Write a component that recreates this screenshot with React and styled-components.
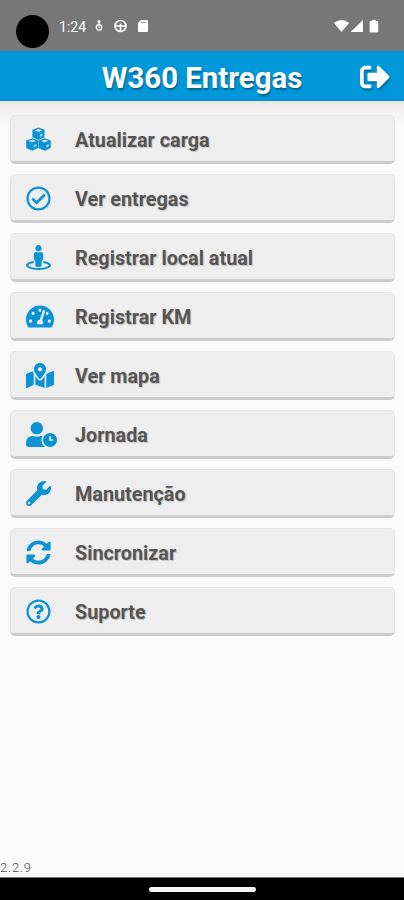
import React from "react";
import styled, { createGlobalStyle } from "styled-components";
import {
  FaRegCheckCircle,
  FaStreetView,
  FaTachometerAlt,
  FaMapMarkedAlt,
  FaUserClock,
  FaWrench,
  FaSyncAlt,
  FaRegQuestionCircle,
  FaSignOutAlt,
} from "react-icons/fa";

const GlobalStyle = createGlobalStyle`
* {
  box-sizing: border-box;
}
body {
  margin: 0;
  background: #fafafa;
  font-family: Roboto, "Liberation Sans", sans-serif;
}
`;

const Screen = styled.div`
width: 100%;
height: 100vh;
display: flex;
flex-direction: column;
overflow: hidden;
background: #fbfbfb;
`;

const StatusBar = styled.div`
height: 51px;
flex-shrink: 0;
display: flex;
align-items: flex-start;
padding: 15px 25px 0 16px;
background: #777777;
color: #fff;
`;

const Camera = styled.div`
width: 33px;
height: 33px;
border-radius: 50%;
background: #000;
`;

const Clock = styled.span`
margin-left: 10px;
width: 29px;
font-size: 14px;
line-height: 24px;
white-space: nowrap;
`;

const StatusIcons = styled.div`
display: flex;
align-items: center;
height: 22px;
margin-left: ${({ $right }) => ($right ? "auto" : "6px")};
svg {
  display: block;
}
`;

const Header = styled.header`
height: 50px;
flex-shrink: 0;
display: grid;
grid-template-columns: 1fr auto 1fr;
align-items: center;
padding: 0 14px;
background: #0198d9;
border-bottom: 1px solid #1786bd;
color: #fff;
`;

const Title = styled.h1`
grid-column: 2;
margin: 5px 0 0;
font-size: 29.4px;
line-height: 36px;
font-weight: 700;
white-space: nowrap;
text-shadow: 1px 2px 2px rgba(0, 0, 0, 0.35);
`;

const LogoutButton = styled.button`
justify-self: end;
margin-top: 2px;
padding: 0;
border: none;
background: none;
color: #fff;
font-size: 30px;
line-height: 0;
filter: drop-shadow(1px 2px 1px rgba(0, 0, 0, 0.3));
`;

const Content = styled.main`
flex: 1;
display: flex;
flex-direction: column;
padding: 14px 9px 0 10px;
background: linear-gradient(#e6e6e6, #f4f4f4 12px, #fbfbfb 26px);
`;

const Menu = styled.nav`
display: flex;
flex-direction: column;
gap: 10px;
`;

const MenuButton = styled.button`
height: 49px;
display: flex;
align-items: center;
padding: 1px 0 0 15px;
border: 1px solid #e7e7e7;
border-bottom: 3px solid #cdcdcd;
border-radius: 5px;
background: #eeeeee;
color: #555555;
font-family: inherit;
font-size: 19.8px;
font-weight: 700;
text-align: left;
text-shadow: 1px 1px 1px rgba(0, 0, 0, 0.18);
`;

const IconSlot = styled.span`
width: 49px;
display: flex;
color: #0c93d6;
svg {
  width: ${({ $width }) => $width || 25}px;
  height: 25px;
  flex-shrink: 0;
}
`;

const Label = styled.span`
padding-top: 3px;
`;

const Version = styled.div`
margin-top: auto;
height: 18px;
margin-left: -10px;
color: #4a4a4a;
font-size: 13px;
font-weight: 300;
line-height: 18px;
letter-spacing: 0.8px;
`;

const NavBar = styled.div`
height: 23px;
flex-shrink: 0;
display: flex;
justify-content: center;
align-items: center;
background: #000;
border-top: 1px solid #777;
`;

const HomeHandle = styled.div`
width: 107px;
height: 5px;
border-radius: 3px;
background: #f4f4f4;
`;

const Cube = ({ x, y }) => (
  <g transform={`translate(${x} ${y})`}>
    <path d="M6.3 0L12.4 2.2V9.7L6.3 12.5L0.2 9.7V2.2z" />
    <path d="M6.3 1.5L10 2.8L6.3 4.1L2.6 2.8z" fill="#eee" />
    <path d="M7.8 6.9L10.4 5.8V8.1L7.8 9.4z" fill="#eee" fillOpacity="0.7" />
  </g>
);

const Cubes = () => (
  <svg viewBox="0 0 25 25" fill="currentColor">
    <Cube x={6.2} y={0.6} />
    <Cube x={0} y={11.2} />
    <Cube x={12.4} y={11.2} />
  </svg>
);

const items = [
  { label: "Atualizar carga", Icon: Cubes },
  { label: "Ver entregas", Icon: FaRegCheckCircle },
  { label: "Registrar local atual", Icon: FaStreetView },
  { label: "Registrar KM", Icon: FaTachometerAlt, width: 28 },
  { label: "Ver mapa", Icon: FaMapMarkedAlt, width: 28 },
  { label: "Jornada", Icon: FaUserClock, width: 31 },
  { label: "Manutenção", Icon: FaWrench },
  { label: "Sincronizar", Icon: FaSyncAlt },
  { label: "Suporte", Icon: FaRegQuestionCircle },
];

const Notifications = () => (
  <svg width="56" height="14" viewBox="0 0 56 14" fill="none" stroke="#fff">
    <circle cx="5" cy="2.6" r="1.5" fill="#fff" stroke="none" />
    <path d="M5 3v3" strokeWidth="1.3" />
    <circle cx="5" cy="8.4" r="2.7" strokeWidth="1.3" />
    <path d="M5 6v3" strokeWidth="1.1" />
    <circle cx="26.5" cy="7" r="5.5" strokeWidth="1.7" />
    <path d="M21 7h11M26.5 4.4v8" strokeWidth="1.7" />
    <path d="M47 1h6q1 0 1 1v10q0 1-1 1h-8q-1 0-1-1V4z" fill="#fff" stroke="none" />
    <path d="M47 3.4h5" stroke="#aaa" strokeWidth="1" />
  </svg>
);

const Signals = () => (
  <svg width="45" height="14" viewBox="0 0 45 14" fill="#fff">
    <path d="M0 4Q7.5-1.8 15 4L7.5 13z" />
    <path d="M29 1v12H16.5z" />
    <path d="M36.6 2h1.6V0.8h3.4V2h1.6q1 0 1 1v9.4q0 1-1 1h-6.6q-1 0-1-1V3q0-1 1-1z" />
  </svg>
);

const App = () => {
  return (
    <Screen>
      <GlobalStyle />
      <StatusBar>
        <Camera />
        <Clock>1:24</Clock>
        <StatusIcons>
          <Notifications />
        </StatusIcons>
        <StatusIcons $right>
          <Signals />
        </StatusIcons>
      </StatusBar>
      <Header>
        <Title>W360 Entregas</Title>
        <LogoutButton aria-label="Sair">
          <FaSignOutAlt />
        </LogoutButton>
      </Header>
      <Content>
        <Menu>
          {items.map(({ label, Icon, width }) => (
            <MenuButton key={label}>
              <IconSlot $width={width}>
                <Icon />
              </IconSlot>
              <Label>{label}</Label>
            </MenuButton>
          ))}
        </Menu>
        <Version>2.2.9</Version>
      </Content>
      <NavBar>
        <HomeHandle />
      </NavBar>
    </Screen>
  );
};

export default App;
